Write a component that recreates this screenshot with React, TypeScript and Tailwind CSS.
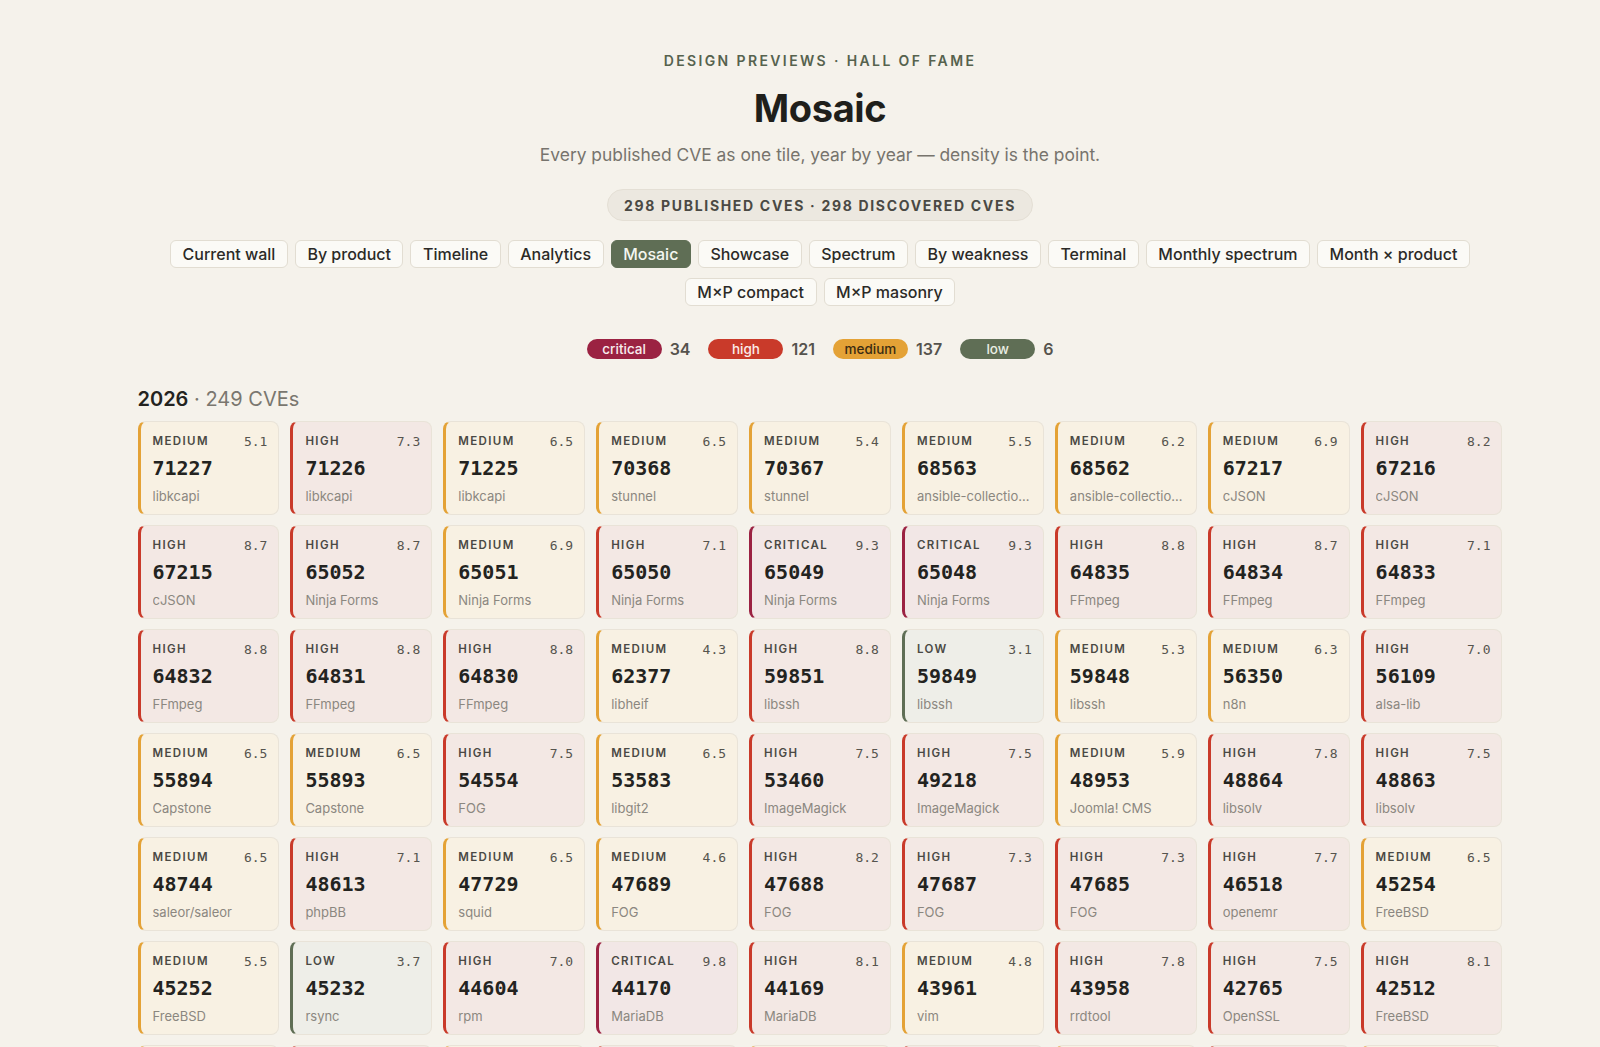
import React from 'react';

type Sev = 'CRITICAL' | 'HIGH' | 'MEDIUM' | 'LOW';

type Cve = { sev: Sev; score: string; id: string; product: string };

const SEV_STYLES: Record<Sev, string> = {
  CRITICAL: 'bg-[#f2e7e6] border-l-[#9b2242]',
  HIGH: 'bg-[#f3e8e4] border-l-[#c93a2a]',
  MEDIUM: 'bg-[#f8f1e3] border-l-[#e4a236]',
  LOW: 'bg-[#eeeee8] border-l-[#5f6e55]',
};

const raw = `
MEDIUM|5.1|71227|libkcapi
HIGH|7.3|71226|libkcapi
MEDIUM|6.5|71225|libkcapi
MEDIUM|6.5|70368|stunnel
MEDIUM|5.4|70367|stunnel
MEDIUM|5.5|68563|ansible-collections
MEDIUM|6.2|68562|ansible-collections
MEDIUM|6.9|67217|cJSON
HIGH|8.2|67216|cJSON
HIGH|8.7|67215|cJSON
HIGH|8.7|65052|Ninja Forms
MEDIUM|6.9|65051|Ninja Forms
HIGH|7.1|65050|Ninja Forms
CRITICAL|9.3|65049|Ninja Forms
CRITICAL|9.3|65048|Ninja Forms
HIGH|8.8|64835|FFmpeg
HIGH|8.7|64834|FFmpeg
HIGH|7.1|64833|FFmpeg
HIGH|8.8|64832|FFmpeg
HIGH|8.8|64831|FFmpeg
HIGH|8.8|64830|FFmpeg
MEDIUM|4.3|62377|libheif
HIGH|8.8|59851|libssh
LOW|3.1|59849|libssh
MEDIUM|5.3|59848|libssh
MEDIUM|6.3|56350|n8n
HIGH|7.0|56109|alsa-lib
MEDIUM|6.5|55894|Capstone
MEDIUM|6.5|55893|Capstone
HIGH|7.5|54554|FOG
MEDIUM|6.5|53583|libgit2
HIGH|7.5|53460|ImageMagick
HIGH|7.5|49218|ImageMagick
MEDIUM|5.9|48953|Joomla! CMS
HIGH|7.8|48864|libsolv
HIGH|7.5|48863|libsolv
MEDIUM|6.5|48744|saleor/saleor
HIGH|7.1|48613|phpBB
MEDIUM|6.5|47729|squid
MEDIUM|4.6|47689|FOG
HIGH|8.2|47688|FOG
HIGH|7.3|47687|FOG
HIGH|7.3|47685|FOG
HIGH|7.7|46518|openemr
MEDIUM|6.5|45254|FreeBSD
MEDIUM|5.5|45252|FreeBSD
LOW|3.7|45232|rsync
HIGH|7.0|44604|rpm
CRITICAL|9.8|44170|MariaDB
HIGH|8.1|44169|MariaDB
MEDIUM|4.8|43961|vim
HIGH|7.8|43958|rrdtool
HIGH|7.5|42765|OpenSSL
HIGH|8.1|42512|FreeBSD
MEDIUM|6.1|41998|FreeBSD
HIGH|7.5|41652|curl
MEDIUM|5.3|41651|curl
HIGH|7.8|40815|Linux
MEDIUM|6.5|40814|Linux
HIGH|7.2|40433|Redis
MEDIUM|5.9|40432|Redis
HIGH|7.4|39847|nginx
MEDIUM|6.3|39846|nginx
`;

const CVES: Cve[] = raw
  .trim()
  .split('\n')
  .map((line) => {
    const [sev, score, id, product] = line.split('|');
    return { sev: sev as Sev, score, id, product };
  });

const NAV = [
  'Current wall',
  'By product',
  'Timeline',
  'Analytics',
  'Mosaic',
  'Showcase',
  'Spectrum',
  'By weakness',
  'Terminal',
  'Monthly spectrum',
  'Month × product',
  'M×P compact',
  'M×P masonry',
];

const Tile = ({ cve }: { cve: Cve }) => (
  <div
    className={`h-[94px] rounded-[8px] border border-[#e9e3d8] border-l-[3px] pl-[12px] pr-[11px] pt-[13px] ${SEV_STYLES[cve.sev]}`}
  >
    <div className="flex items-center justify-between h-[14px]">
      <span className="text-[11.5px] font-semibold tracking-[0.12em] text-[#4a4944]">{cve.sev}</span>
      <span className="font-['DejaVu_Sans_Mono',monospace] text-[13px] text-[#56544e]">{cve.score}</span>
    </div>
    <div className="mt-[6px] h-[27px] leading-[27px] font-['DejaVu_Sans_Mono',monospace] text-[20px] font-bold text-[#232320]">
      {cve.id}
    </div>
    <div className="mt-[5px] h-[18px] leading-[18px] text-[13px] text-[#8b8780] truncate">{cve.product}</div>
  </div>
);

export default function App() {
  return (
    <div className="min-h-screen bg-[#f5f2eb] pl-[40px] font-['Inter','Liberation_Sans',sans-serif] text-[#232320]">
      <div className="flex flex-col items-center pt-[51px] pb-10">
        <div className="h-[20px] leading-[20px] text-[14px] font-semibold tracking-[0.17em] text-[#56624e]">
          DESIGN PREVIEWS · HALL OF FAME
        </div>
        <h1 className="mt-[14px] h-[46px] leading-[46px] text-[38px] font-bold tracking-[-0.01em] text-[#1f1f1b]">
          Mosaic
        </h1>
        <p className="mt-[11px] h-[26px] leading-[26px] text-[17.4px] text-[#77746d]">
          Every published CVE as one tile, year by year — density is the point.
        </p>
        <div className="mt-[21px] h-[32px] flex items-center rounded-full border border-[#e4dfd5] bg-[#ece8e0] px-[16px] text-[14px] font-bold tracking-[0.12em] text-[#4a4944]">
          298 PUBLISHED CVES · 298 DISCOVERED CVES
        </div>

        <nav className="mt-[19px] w-[1365px] flex flex-wrap justify-center gap-x-[7px] gap-y-[10px]">
          {NAV.map((item) =>
            item === 'Mosaic' ? (
              <span
                key={item}
                className="h-[28px] flex items-center rounded-[6px] border border-[#5f6e55] bg-[#5f6e55] px-[11.5px] text-[16px] font-medium text-[#f4f6f0]"
              >
                {item}
              </span>
            ) : (
              <span
                key={item}
                className="h-[28px] flex items-center rounded-[6px] border border-[#e2ddd2] bg-[#fbfaf6] px-[11.5px] text-[16px] font-medium text-[#2b2a27]"
              >
                {item}
              </span>
            )
          )}
        </nav>

        <div className="mt-[31px] flex items-center gap-[18px]">
          <div className="flex items-center gap-[8px]">
            <span className="w-[75px] h-[20px] flex items-center justify-center rounded-full bg-[#9b2242] text-[13.5px] font-medium text-[#f8ecee]">critical</span>
            <span className="text-[16px] font-semibold text-[#55534d]">34</span>
          </div>
          <div className="flex items-center gap-[8px]">
            <span className="w-[75px] h-[20px] flex items-center justify-center rounded-full bg-[#c93a2a] text-[13.5px] font-medium text-[#fbecea]">high</span>
            <span className="text-[16px] font-semibold text-[#55534d]">121</span>
          </div>
          <div className="flex items-center gap-[8px]">
            <span className="w-[75px] h-[20px] flex items-center justify-center rounded-full bg-[#e4a236] text-[13.5px] font-medium text-[#3b2c12]">medium</span>
            <span className="text-[16px] font-semibold text-[#55534d]">137</span>
          </div>
          <div className="flex items-center gap-[8px]">
            <span className="w-[75px] h-[20px] flex items-center justify-center rounded-full bg-[#5f6e55] text-[13.5px] font-medium text-[#e9eee4]">low</span>
            <span className="text-[16px] font-semibold text-[#55534d]">6</span>
          </div>
        </div>

        <section className="mt-[24px] w-[1365px]">
          <h2 className="h-[28px] leading-[28px] text-[20px]">
            <span className="font-semibold text-[#232320]">2026</span>
            <span className="text-[#7a776f]"> · 249 CVEs</span>
          </h2>
          <div className="mt-[8px] grid grid-cols-9 gap-x-[11px] gap-y-[10px]">
            {CVES.map((cve) => (
              <Tile key={cve.id} cve={cve} />
            ))}
          </div>
        </section>
      </div>
    </div>
  );
}
